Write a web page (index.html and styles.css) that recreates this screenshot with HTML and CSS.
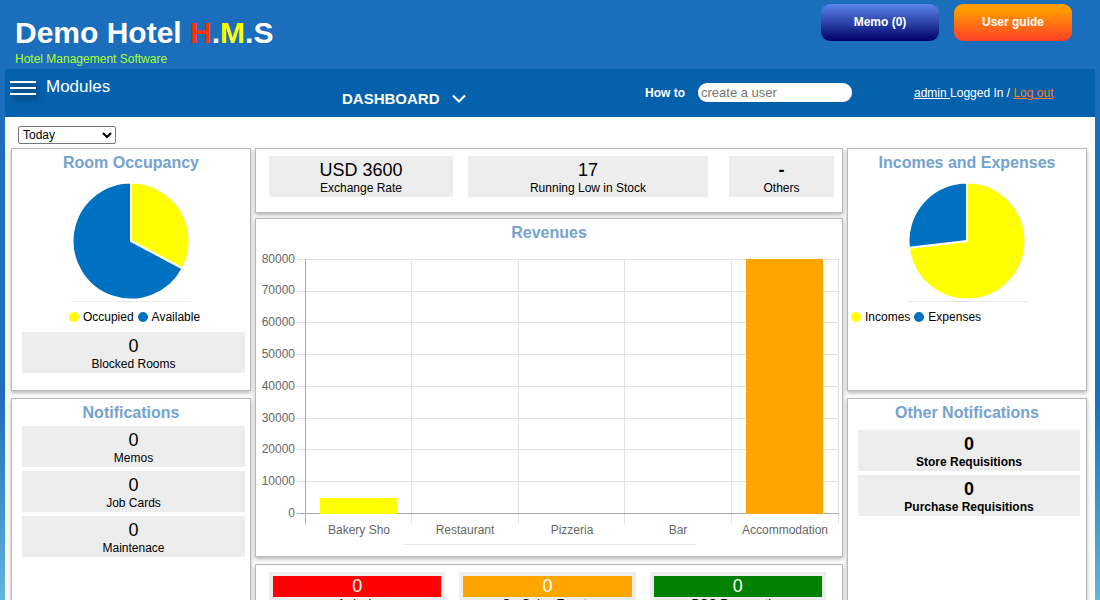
FILE: index.html
```html
<!DOCTYPE html>
<html lang="en">
<head>
<meta charset="utf-8">
<title>Demo Hotel H.M.S</title>
<link rel="stylesheet" href="styles.css">
</head>
<body class="app">
<header class="brand-bar">
  <div class="brand">
    <h1 class="brand-name">Demo Hotel <span class="brand-h">H</span>.<span class="brand-m">M</span>.S</h1>
    <p class="brand-tag">Hotel Management Software</p>
  </div>
  <div class="brand-actions">
    <button class="pill pill-memo" type="button">Memo (0)</button>
    <button class="pill pill-guide" type="button">User guide</button>
  </div>
</header>
<div class="page">
  <nav class="nav">
    <button class="modules" type="button">
      <svg class="burger" width="32" height="24" viewBox="0 0 32 24" aria-hidden="true">
        <path d="M0 5h26M0 11h26M0 17h26" stroke="#fff" stroke-width="2"/>
      </svg>
      Modules
    </button>
    <button class="view-switch" type="button">
      DASHBOARD
      <svg width="14" height="10" viewBox="0 0 14 10" aria-hidden="true">
        <path d="M1 1.500l6 6 6-6" fill="none" stroke="#fff" stroke-width="2"/>
      </svg>
    </button>
    <div class="howto">
      <label for="howto">How to</label>
      <input id="howto" class="howto-input" type="text" placeholder="create a user">
    </div>
    <p class="session"><a class="user-link" href="#">admin </a>Logged In / <a class="logout-link" href="#">Log out</a></p>
  </nav>
  <main class="content">
    <div class="filter">
      <select class="period" aria-label="Period"><option>Today</option></select>
    </div>
    <div class="columns">
      <div class="column side-column">
        <section class="card pie-card">
          <h2 class="card-title">Room Occupancy</h2>
          <svg class="pie" width="120" height="120" viewBox="0 0 120 120" role="img" aria-label="Room occupancy">
            <g stroke="#fff" stroke-width="2" stroke-linejoin="round">
              <path d="M60 60V1.500A58.500 58.500 0 0 1 111.700 87.500Z" fill="#ff0"/>
              <path d="M60 60L111.700 87.500A58.500 58.500 0 1 1 60 1.500Z" fill="#0070c0"/>
            </g>
          </svg>
          <div class="legend-rule"></div>
          <ul class="legend legend-center">
            <li><span class="dot dot-yellow"></span>Occupied</li>
            <li><span class="dot dot-blue"></span>Available</li>
          </ul>
          <div class="stats">
            <div class="stat"><span class="stat-value">0</span><span>Blocked Rooms</span></div>
          </div>
        </section>
        <section class="card notice-card">
          <h2 class="card-title">Notifications</h2>
          <div class="stats">
            <div class="stat"><span class="stat-value">0</span><span>Memos</span></div>
            <div class="stat"><span class="stat-value">0</span><span>Job Cards</span></div>
            <div class="stat"><span class="stat-value">0</span><span>Maintenace</span></div>
          </div>
        </section>
      </div>
      <div class="column main-column">
        <section class="card summary-card">
          <div class="stat stat-rate"><span class="stat-value">USD 3600</span><span>Exchange Rate</span></div>
          <div class="stat stat-stock"><span class="stat-value">17</span><span>Running Low in Stock</span></div>
          <div class="stat stat-others"><span class="stat-value">-</span><span>Others</span></div>
        </section>
        <section class="card chart-card">
          <h2 class="card-title">Revenues</h2>
          <svg class="chart" viewBox="0 0 586 298" role="img" aria-label="Revenues by outlet">
            <g class="grid-lines">
              <path d="M41 13.500H583M41 45.500H583M41 76.500H583M41 108.500H583M41 140.500H583M41 172.500H583M41 203.500H583M41 235.500H583"/>
              <path d="M155.500 13V278M262.500 13V278M368.500 13V278M475.500 13V278M582.500 13V278"/>
            </g>
            <path class="axis-lines" d="M49.500 13V278M41 267.500H583"/>
            <rect x="64" y="252" width="77" height="16" fill="#ff0"/>
            <rect x="490" y="13" width="77" height="255" fill="orange"/>
            <g class="y-labels">
              <text x="39" y="17">80000</text>
              <text x="39" y="48">70000</text>
              <text x="39" y="80">60000</text>
              <text x="39" y="112">50000</text>
              <text x="39" y="144">40000</text>
              <text x="39" y="176">30000</text>
              <text x="39" y="207">20000</text>
              <text x="39" y="239">10000</text>
              <text x="39" y="271">0</text>
            </g>
            <g class="x-labels">
              <text x="103" y="288">Bakery Sho</text>
              <text x="209" y="288">Restaurant</text>
              <text x="316" y="288">Pizzeria</text>
              <text x="422" y="288">Bar</text>
              <text x="529" y="288">Accommodation</text>
            </g>
          </svg>
          <div class="chart-rule"></div>
        </section>
        <section class="card status-card">
          <div class="status"><span class="status-value status-red">0</span><span class="status-label">Arrivals</span></div>
          <div class="status"><span class="status-value status-orange">0</span><span class="status-label">On Going Events</span></div>
          <div class="status"><span class="status-value status-green">0</span><span class="status-label">POS Reservation</span></div>
        </section>
      </div>
      <div class="column side-column">
        <section class="card pie-card">
          <h2 class="card-title">Incomes and Expenses</h2>
          <svg class="pie" width="120" height="120" viewBox="0 0 120 120" role="img" aria-label="Incomes and expenses">
            <g stroke="#fff" stroke-width="2" stroke-linejoin="round">
              <path d="M60 60V1.500A58.500 58.500 0 1 1 1.900 66.800Z" fill="#ff0"/>
              <path d="M60 60L1.900 66.800A58.500 58.500 0 0 1 60 1.500Z" fill="#0070c0"/>
            </g>
          </svg>
          <div class="legend-rule"></div>
          <ul class="legend">
            <li><span class="dot dot-yellow"></span>Incomes</li>
            <li><span class="dot dot-blue"></span>Expenses</li>
          </ul>
        </section>
        <section class="card notice-card">
          <h2 class="card-title">Other Notifications</h2>
          <div class="stats stats-strong">
            <div class="stat"><span class="stat-value">0</span><span>Store Requisitions</span></div>
            <div class="stat"><span class="stat-value">0</span><span>Purchase Requisitions</span></div>
          </div>
        </section>
      </div>
    </div>
  </main>
</div>
</body>
</html>
```

FILE: styles.css
```css
* {
  box-sizing: border-box;
}

.app {
  margin: 0;
  height: 100vh;
  overflow: hidden;
  font: 12px/16px "Liberation Sans", Arial, sans-serif;
  color: #000;
  background: linear-gradient(#1a6ebc 0, #1a6ebc 66%, #62b5dc 100%);
}

h1, h2, p, ul {
  margin: 0;
  padding: 0;
}

button {
  border: 0;
  background: none;
  color: inherit;
  font: inherit;
  cursor: pointer;
}

.brand-bar {
  display: flex;
  justify-content: space-between;
  align-items: flex-start;
  padding: 4px 28px 0 15px;
  min-height: 69px;
  color: #fff;
}

.brand {
  padding-top: 11px;
}

.brand-name {
  font-size: 30px;
  line-height: 36px;
}

.brand-h {
  color: #ff3300;
}

.brand-m {
  color: #ff0;
}

.brand-tag {
  line-height: 16px;
  color: #adff2f;
}

.brand-actions {
  display: flex;
  gap: 15px;
}

.pill {
  width: 118px;
  height: 37px;
  padding-bottom: 3px;
  border-radius: 9px;
  font-weight: bold;
  color: #fff;
}

.pill-memo {
  background: linear-gradient(#5a85ec, #000066);
}

.pill-guide {
  background: linear-gradient(#ff9c00 15%, #ff4029);
}

.page {
  margin: 0 5px;
}

.nav {
  display: grid;
  grid-template-columns: 332px 298px 264px 1fr;
  align-items: center;
  height: 48px;
  color: #fff;
  background: #0561ab;
}

.modules {
  display: flex;
  align-items: center;
  gap: 4px;
  padding: 0 5px 12px;
  font-size: 17px;
  line-height: 24px;
}

.burger {
  margin-top: 4px;
  filter: drop-shadow(3px 4px 2px rgba(0, 0, 0, 0.4));
}

.view-switch {
  display: flex;
  align-items: center;
  gap: 12px;
  padding: 12px 5px 0;
  font-size: 15px;
  font-weight: bold;
}

.howto {
  display: flex;
  align-items: center;
  gap: 13px;
  padding-left: 10px;
  font-weight: bold;
}

.howto-input {
  width: 154px;
  height: 19px;
  margin-bottom: 2px;
  padding: 0 3px;
  border: 0;
  border-radius: 9px;
  background: #fff;
  font: 13px "Liberation Sans", Arial, sans-serif;
}

.howto-input::placeholder {
  color: #757575;
}

.session {
  padding-left: 15px;
}

.user-link {
  color: #fff;
  white-space: pre;
}

.logout-link {
  color: #ff7f27;
}

.content {
  padding: 9px 8px 0 6px;
  background: #fff;
}

.filter {
  display: flex;
  padding: 0 7px 4px;
}

.period {
  width: 98px;
  height: 18px;
  border: 1px solid #767676;
  border-radius: 2px;
  background: #fff;
  color: #000;
  font: 12px "Liberation Sans", Arial, sans-serif;
}

.columns {
  display: grid;
  grid-template-columns: 240px 1fr 240px;
  gap: 4px;
}

.column {
  display: flex;
  flex-direction: column;
}

.side-column {
  gap: 7px;
}

.card {
  border: 1px solid #b9b9b9;
  background: #fff;
  box-shadow: 0 2px 4px rgba(0, 0, 0, 0.3);
}

.card-title {
  padding-top: 4px;
  font-size: 16px;
  line-height: 20px;
  text-align: center;
  color: #74a2d0;
}

.pie-card {
  min-height: 243px;
}

.pie {
  display: block;
  margin: 8px auto 0;
}

.legend-rule {
  width: 120px;
  height: 1px;
  margin: 0 auto;
  background: #e9e9e9;
}

.legend {
  display: flex;
  gap: 4px;
  padding: 6px 3px;
  line-height: 18px;
  list-style: none;
}

.legend-center {
  justify-content: center;
  padding-left: 10px;
}

.legend li {
  display: flex;
  align-items: center;
  gap: 4px;
}

.dot {
  width: 10px;
  height: 10px;
  border-radius: 50%;
}

.dot-yellow {
  background: #ff0;
}

.dot-blue {
  background: #0070c0;
}

.stats {
  display: flex;
  flex-direction: column;
  gap: 4px;
  padding: 0 5px 0 10px;
}

.stats-strong {
  padding: 4px 6px 0 10px;
  font-weight: bold;
}

.stat {
  display: flex;
  flex-direction: column;
  padding: 4px 0 1px;
  text-align: center;
  background: #ededed;
}

.stat-value {
  font-size: 18px;
  line-height: 20px;
}

.notice-card {
  min-height: 243px;
  padding-bottom: 12px;
}

.notice-card .card-title {
  padding-bottom: 3px;
}

.summary-card {
  display: grid;
  grid-template-columns: 184fr 240fr 111fr;
  column-gap: 15px;
  min-height: 65px;
  align-items: start;
  padding: 7px 8px 0 13px;
}

.stat-others {
  margin-left: 6px;
}

.stat-others .stat-value {
  font-weight: bold;
}

.chart-card {
  margin-top: 5px;
  padding-bottom: 11px;
}

.chart {
  display: block;
  width: 100%;
  margin-top: 3px;
}

.grid-lines {
  fill: none;
  stroke: #e2e2e2;
}

.axis-lines {
  fill: none;
  stroke: #ababab;
}

.y-labels {
  fill: #666;
  text-anchor: end;
}

.x-labels {
  fill: #666;
  text-anchor: middle;
}

.chart-rule {
  width: 50%;
  height: 1px;
  margin: 0 auto;
  background: #e9e9e9;
}

.status-card {
  display: grid;
  grid-template-columns: repeat(3, 1fr);
  gap: 14px;
  margin-top: 7px;
  padding: 7px 16px 12px 13px;
}

.status {
  display: flex;
  flex-direction: column;
  padding: 4px;
  text-align: center;
  background: #ededed;
}

.status-value {
  font-size: 18px;
  line-height: 21px;
  color: #fff;
}

.status-label {
  line-height: 14px;
}

.status-red {
  background: red;
}

.status-orange {
  background: orange;
}

.status-green {
  background: green;
}
```
